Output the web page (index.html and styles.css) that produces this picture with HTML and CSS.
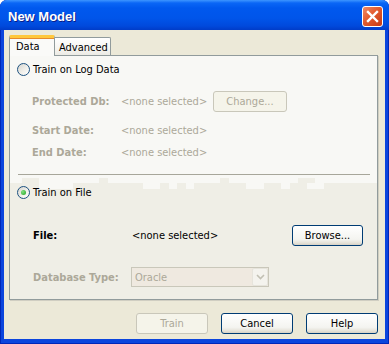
FILE: index.html
```html
<!DOCTYPE HTML>
<html lang="en-US">
<head>
	<meta charset="UTF-8">
	<title>New Model</title>
	<link rel="stylesheet" href="styles.css">
</head>
<body>
	<div class="window">
		<div class="titlebar">
			<span class="title">New Model</span>
			<span class="close">
				<svg width="21" height="21" viewBox="0 0 21 21">
					<path d="M6 6 L15 15 M15 6 L6 15" stroke="#fff" stroke-width="2.4" stroke-linecap="square" fill="none"/>
				</svg>
			</span>
		</div>
		<div class="client">
			<div class="tabs">
				<div class="tab active">Data</div>
				<div class="tab">Advanced</div>
			</div>
			<div class="panel">
				<div class="upper">
					<div class="radio-row"><span class="radio"></span>Train on Log Data</div>
					<div class="field protected">
						<span class="label gray">Protected Db:</span>
						<span class="value gray">&lt;none selected&gt;</span>
						<span class="btn disabled change">Change...</span>
					</div>
					<div class="field start">
						<span class="label gray">Start Date:</span>
						<span class="value gray">&lt;none selected&gt;</span>
					</div>
					<div class="field end">
						<span class="label gray">End Date:</span>
						<span class="value gray">&lt;none selected&gt;</span>
					</div>
					<div class="separator"></div>
				</div>
				<div class="lower">
					<div class="radio-row"><span class="radio checked"></span>Train on File</div>
					<div class="field file">
						<span class="label">File:</span>
						<span class="value">&lt;none selected&gt;</span>
						<span class="btn browse">Browse...</span>
					</div>
					<div class="field dbtype">
						<span class="label gray">Database Type:</span>
						<span class="combo">
							<span class="combo-text">Oracle</span>
							<span class="combo-drop">
								<svg width="9" height="6" viewBox="0 0 9 6">
									<path d="M1 1 L4.5 4.5 L8 1" stroke="#c2c0b4" stroke-width="1.6" fill="none"/>
								</svg>
							</span>
						</span>
					</div>
				</div>
			</div>
			<div class="buttons">
				<span class="btn disabled">Train</span>
				<span class="btn">Cancel</span>
				<span class="btn">Help</span>
			</div>
		</div>
	</div>
</body>
</html>
```

FILE: styles.css
```css
body
{
	margin: 0;
	background: #fff;
	font-family: "DejaVu Sans Condensed", "Liberation Sans", sans-serif;
	font-size: 11px;
	color: #000;
}

.window
{
	width: 389px;
	height: 344px;
	display: flex;
	flex-direction: column;
	background: #0b45dd;
	border-radius: 7px 7px 0 0;
	overflow: hidden;
	box-shadow: inset 1px 0 #0027b8, inset -1px 0 #0027b8, inset 0 -1px #0027b8;
}

/* caption */

.titlebar
{
	height: 30px;
	flex: none;
	display: flex;
	justify-content: space-between;
	padding: 0 6px 0 8px;
	background: linear-gradient(#3d95ff 0, #0a66f6 3px, #0058ee 8px, #0055ea 18px, #0049dc 26px, #003cc8 30px);
}

.title
{
	font-family: "Liberation Sans", sans-serif;
	font-weight: bold;
	font-size: 13px;
	color: #fff;
	line-height: 16px;
	padding-top: 9px;
	text-shadow: 1px 1px 0 #0a1e8a;
}

.close
{
	width: 21px;
	height: 21px;
	margin-top: 6px;
	box-sizing: border-box;
	border: 1px solid #fff;
	border-radius: 3px;
	background: linear-gradient(135deg, #ef8a67, #e25a2e 45%, #c53a15);
	display: flex;
	align-items: center;
	justify-content: center;
}

.close svg
{
	margin: -1px;
}

/* client area */

.client
{
	height: 309px;
	margin: 0 4px;
	background: #ece9d8;
	padding: 5px 7px 0 5px;
	box-sizing: border-box;
}

.tabs
{
	display: flex;
	align-items: flex-end;
	height: 20px;
}

.tab
{
	box-sizing: border-box;
	height: 18px;
	width: 56px;
	border: 1px solid #919b9c;
	border-left: none;
	border-bottom: none;
	border-radius: 0 2px 0 0;
	background: linear-gradient(#ffffff, #f6f5f1 60%, #ecebe5);
	padding: 2px 0 0 4px;
	line-height: 15px;
}

.tab.active
{
	height: 21px;
	width: 46px;
	margin-bottom: -1px;
	border-left: 1px solid #919b9c;
	border-top: 3px solid #ffc83c;
	border-radius: 2px 2px 0 0;
	background: #fafaf8;
	padding: 0 0 0 6px;
	line-height: 17px;
	box-shadow: inset 0 1px 0 #e68b2c;
	position: relative;
	z-index: 1;
}

.panel
{
	box-sizing: border-box;
	width: 369px;
	height: 245px;
	border: 1px solid #919b9c;
	box-shadow: 1px 1px 0 #d0cec2;
	background: #efeee6;
}

.upper
{
	background: #f8f8f5;
	padding-top: 7px;
	padding-bottom: 3px;
}

.lower
{
	padding-top: 8px;
	background:
		linear-gradient(to right,
			transparent 12px, #efeee6 12px, #efeee6 29px, transparent 29px,
			transparent 89px, #efeee6 89px, #efeee6 98px, transparent 98px,
			transparent 210px, #efeee6 210px, #efeee6 219px, transparent 219px,
			transparent 288px, #efeee6 288px, #efeee6 305px, transparent 305px) 0 0 / 100% 5px no-repeat,
		linear-gradient(#f8f8f5, #f8f8f5) 0 0 / 100% 5px no-repeat,
		linear-gradient(to right,
			transparent 29px, #f8f8f5 29px, #f8f8f5 63px, transparent 63px,
			transparent 133px, #f8f8f5 133px, #f8f8f5 150px, transparent 150px,
			transparent 159px, #f8f8f5 159px, #f8f8f5 167px, transparent 167px,
			transparent 176px, #f8f8f5 176px, #f8f8f5 184px, transparent 184px,
			transparent 236px, #f8f8f5 236px, #f8f8f5 254px, transparent 254px,
			transparent 271px, #f8f8f5 271px, #f8f8f5 280px, transparent 280px,
			transparent 297px, #f8f8f5 297px, #f8f8f5 314px, transparent 314px) 0 5px / 100% 6px no-repeat,
		#efeee6;
}

.radio-row
{
	display: flex;
	align-items: center;
	height: 13px;
	padding-left: 7px;
	gap: 3px;
}

.radio
{
	width: 13px;
	height: 13px;
	box-sizing: border-box;
	border: 1px solid #1c5180;
	border-radius: 50%;
	background: linear-gradient(135deg, #d6d5cf, #f0efea 55%, #ffffff);
	display: flex;
	align-items: center;
	justify-content: center;
}

.radio.checked::after
{
	content: "";
	width: 5px;
	height: 5px;
	border-radius: 50%;
	background: radial-gradient(circle at 35% 35%, #7fe07f, #21a121);
}

.field
{
	display: flex;
	align-items: center;
	padding-left: 22px;
}

.label
{
	font-weight: bold;
	width: 89px;
	flex: none;
}

.value
{
	width: 92px;
	flex: none;
}

.gray
{
	color: #aca899;
}

.protected
{
	margin-top: 15px;
	height: 21px;
}

.start
{
	margin-top: 7px;
	height: 22px;
}

.end
{
	height: 23px;
}

.separator
{
	height: 1px;
	margin: 10px 7px 0 8px;
	background: #a7a69a;
}

.file
{
	margin-top: 26px;
	height: 21px;
	padding-left: 23px;
}

.file .label
{
	width: 99px;
}

.file .value
{
	width: 160px;
}

.dbtype
{
	margin-top: 21px;
	padding-left: 23px;
}

.dbtype .label
{
	width: 98px;
}

/* controls */

.btn
{
	box-sizing: border-box;
	width: 72px;
	height: 21px;
	border: 1px solid #003c74;
	border-radius: 3px;
	background: linear-gradient(#ffffff, #f4f4f0 70%, #e4e1d7 90%, #d6d0c5);
	display: flex;
	align-items: center;
	justify-content: center;
}

.btn.disabled
{
	border-color: #c9c7ba;
	background: #f5f4ea;
	color: #aca899;
}

.change
{
	width: 74px;
}

.browse
{
	width: 71px;
}

.combo
{
	box-sizing: border-box;
	width: 138px;
	height: 20px;
	border: 1px solid #c9c7ba;
	background: #efe9e0;
	display: flex;
	align-items: center;
	justify-content: space-between;
	padding: 0 0 0 3px;
	color: #aca899;
}

.combo-drop
{
	box-sizing: border-box;
	width: 16px;
	height: 18px;
	border: 1px solid #e6e4dc;
	border-radius: 2px;
	background: #f4f3ee;
	display: flex;
	align-items: center;
	justify-content: center;
}

.buttons
{
	display: flex;
	justify-content: flex-end;
	gap: 13px;
	margin-top: 13px;
}
```
